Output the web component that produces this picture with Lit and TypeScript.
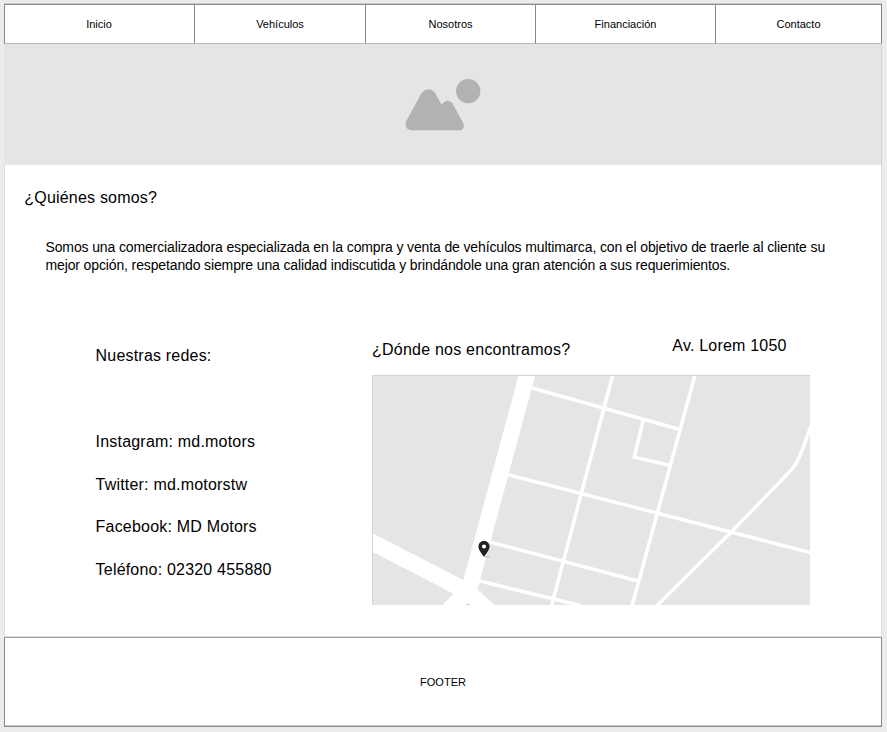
import { LitElement, html, css, svg } from "lit";
import { customElement } from "lit/decorators.js";

const NAV = ["Inicio", "Vehículos", "Nosotros", "Financiación", "Contacto"];

const NETWORKS = [
  "Instagram: md.motors",
  "Twitter: md.motorstw",
  "Facebook: MD Motors",
  "Teléfono: 02320 455880",
];

const STREETS = [
  "M532 388L679 429.3",
  "M612.7 375L551.5 606",
  "M695 375L632 606",
  "M508 474.6L811 552.8",
  "M488 541.5L637 580.8",
  "M478 580.5L582 606",
  "M643.3 420L634.3 457.3L669.5 465.3",
  "M656.5 606L731 532.3L781.7 480L792 469C800 460 803 447 811 426",
];

@customElement("site-map")
class SiteMap extends LitElement {
  static styles = css`
    :host { display: block; width: 438px; height: 230px; }
    .map { display: block; width: 100%; height: 100%; }
    .land { fill: #e5e5e5; }
    .avenue { fill: #fff; }
    .street { fill: none; stroke: #fff; stroke-width: 3.5; }
    .edge { fill: none; stroke: #d3d3d3; }
    .pin { fill: #222; }
    .shade { fill: #bbb; }
  `;
  render() {
    return html`
      <svg class="map" viewBox="372 375 438 230">
        <rect class="land" x="372" y="375" width="438" height="230" />
        ${STREETS.map((d) => svg`<path class="street" d=${d} />`)}
        <path class="avenue" d="M518.7 375H535.3L477.5 589.5L494.5 605H442.5L453.5 593.7L372 551.5V533L463.3 580Z" />
        <path class="edge" d="M372.5 605V375.5H810" />
        <ellipse class="shade" cx="487" cy="556.8" rx="3" ry="0.8" />
        <ellipse class="shade" cx="468" cy="605" rx="1.8" ry="1" />
        <path class="pin" fill-rule="evenodd" d="M484 540.8A5.6 5.6 0 0 1 489.6 546.4C489.6 550.2 484 556.6 484 556.6S478.4 550.2 478.4 546.4A5.6 5.6 0 0 1 484 540.8ZM484 544.4A2.1 2.1 0 1 0 484 548.6A2.1 2.1 0 1 0 484 544.4Z" />
      </svg>
    `;
  }
}

@customElement("app-root")
class AppRoot extends LitElement {
  static styles = css`
    :host {
      display: block;
      box-sizing: border-box;
      height: 732px;
      padding: 3px 5px 5px 4px;
      background: #ececec;
      color: #000;
      font-family: "Liberation Sans", Arial, sans-serif;
      font-size: 16px;
      line-height: 20px;
      letter-spacing: 0.2px;
    }
    .page {
      display: flex;
      flex-direction: column;
      box-sizing: border-box;
      width: 878px;
      height: 724px;
      background: #fff;
    }
    .nav {
      display: grid;
      grid-template-columns: 190px 171px 170px 180px 167px;
      box-sizing: border-box;
      height: 41px;
      border-top: 1px solid #c8c8c8;
      font-size: 11px;
      letter-spacing: 0;
    }
    .item {
      display: flex;
      align-items: center;
      justify-content: center;
      border-left: 1px solid #858585;
      border-top: 1px solid #8a8a8a;
      border-bottom: 1px solid #b8b8b8;
    }
    .item:first-child { padding-right: 1px; }
    .item:last-child { border-right: 1px solid #858585; }
    .hero {
      height: 121px;
      background: #e5e5e5;
      border-right: 1px solid #d4d4d4;
    }
    .picture { display: block; width: 877px; height: 121px; fill: #b2b2b2; }
    .content {
      flex: 1;
      box-sizing: border-box;
      border: 0 solid #ddd;
      border-width: 0 1px;
      padding: 23px 0 0 19.3px;
    }
    h1, h2, p, ul { margin: 0; padding: 0; font: inherit; }
    .about {
      width: 800px;
      margin: 30px 0 0 21.2px;
      font-size: 14px;
      line-height: 18px;
      letter-spacing: -0.13px;
    }
    .columns { display: flex; margin: 62px 0 0 0.7px; }
    .social { width: 347px; padding: 10px 0 0 70.6px; box-sizing: border-box; }
    .list { list-style: none; display: grid; gap: 22.7px; margin-top: 66px; }
    .place { width: 438px; }
    .heads { display: flex; justify-content: space-between; height: 39px; padding-right: 23.4px; }
    .where { padding-top: 4px; letter-spacing: 0.23px; }
    .footer {
      display: flex;
      align-items: center;
      justify-content: center;
      box-sizing: border-box;
      height: 90px;
      border: 1px solid #8a8a8a;
      border-top-color: #a0a0a0;
      box-shadow: 0 -1px #dcdcdc, inset 0 -1px #ccc;
      font-size: 11px;
      letter-spacing: 0;
    }
  `;
  render() {
    return html`
      <div class="page">
        <nav class="nav">${NAV.map((n) => html`<div class="item">${n}</div>`)}</nav>
        <div class="hero">
          <svg class="picture" viewBox="4 44 877 121">
            <circle cx="468.2" cy="91.1" r="12.2" />
            <path d="M422 92.2Q428.5 86.4 434.7 92.2L441.7 105Q446.5 97.8 452.3 103L463.4 123.5Q465.6 130 459 130.2H412Q403.8 129.5 406.1 121.5Z" />
          </svg>
        </div>
        <main class="content">
          <h1>¿Quiénes somos?</h1>
          <p class="about">Somos una comercializadora especializada en la compra y venta de vehículos multimarca, con el objetivo de traerle al cliente su mejor opción, respetando siempre una calidad indiscutida y brindándole una gran atención a sus requerimientos.</p>
          <div class="columns">
            <section class="social">
              <h2>Nuestras redes:</h2>
              <ul class="list">${NETWORKS.map((n) => html`<li>${n}</li>`)}</ul>
            </section>
            <section class="place">
              <div class="heads">
                <h2 class="where">¿Dónde nos encontramos?</h2>
                <p>Av. Lorem 1050</p>
              </div>
              <site-map></site-map>
            </section>
          </div>
        </main>
        <footer class="footer">FOOTER</footer>
      </div>
    `;
  }
}
